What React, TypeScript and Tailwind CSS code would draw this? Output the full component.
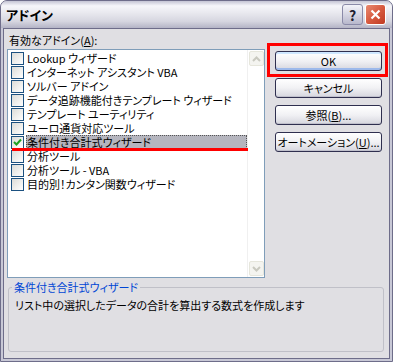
import React from "react";

const items: { label: string; checked?: boolean; selected?: boolean }[] = [
  { label: "Lookup ウィザード" },
  { label: "インターネット アシスタント VBA" },
  { label: "ソルバー アドイン" },
  { label: "データ追跡機能付きテンプレート ウィザード" },
  { label: "テンプレート ユーティリティ" },
  { label: "ユーロ通貨対応ツール" },
  { label: "条件付き合計式ウィザード", checked: true, selected: true },
  { label: "分析ツール" },
  { label: "分析ツール - VBA" },
  { label: "目的別！カンタン関数ウィザード" },
];

const font = {
  fontFamily: '"Noto Sans CJK JP", "Noto Sans", sans-serif',
  fontFeatureSettings: '"palt"',
};

function CheckBox({ checked }: { checked?: boolean }) {
  return (
    <div className="w-[13px] h-[13px] shrink-0 border border-[#1c5180] bg-gradient-to-br from-[#dcdcd7] to-[#ffffff] flex items-center justify-center">
      {checked && (
        <svg width="9" height="9" viewBox="0 0 9 9">
          <path d="M1 4 L3.5 6.5 L8 1.5" stroke="#21a121" strokeWidth="2" fill="none" />
        </svg>
      )}
    </div>
  );
}

function XPButton({ children, primary }: { children: React.ReactNode; primary?: boolean }) {
  return (
    <div
      className={`h-[20px] w-[107px] rounded-[3px] border border-[#2f2f4f] bg-gradient-to-b from-[#ffffff] via-[#f1f1f4] to-[#d6d6de] flex items-center justify-center text-[11px] leading-[14px] whitespace-nowrap text-black ${
        primary ? "shadow-[inset_0_-2px_0_#9db9eb,inset_0_2px_0_#cee7ff]" : "shadow-[inset_0_-1px_0_#c0c0cc]"
      }`}
    >
      {children}
    </div>
  );
}

export default function App() {
  return (
    <div className="w-[393px] h-[362px] relative overflow-hidden" style={font}>
      <div className="w-full h-full flex flex-col rounded-t-[7px] border border-[#6e6d8a] bg-[#c8c8d6]">
        {/* Title bar */}
        <div className="h-[27px] shrink-0 rounded-t-[6px] bg-[linear-gradient(to_bottom,#c4c4d4_0%,#f6f6fa_18%,#e8e8ee_45%,#d6d6e0_75%,#b4b4c6_100%)] flex items-center pl-[5px] pr-[6px]">
          <span className="text-[13px] font-bold text-black leading-none">アドイン</span>
          <div className="ml-auto flex items-center gap-[2px]">
            <div className="w-[21px] h-[21px] rounded-[3px] border border-[#8a8aa8] bg-gradient-to-b from-[#f4f4fa] to-[#b8b8cc] flex items-center justify-center text-[14px] font-bold text-[#202030] leading-none">
              ?
            </div>
            <div className="w-[21px] h-[21px] rounded-[3px] border border-white bg-gradient-to-br from-[#e88a70] via-[#d75a40] to-[#c03a22] flex items-center justify-center">
              <svg width="11" height="11" viewBox="0 0 11 11">
                <path d="M1.5 1.5 L9.5 9.5 M9.5 1.5 L1.5 9.5" stroke="white" strokeWidth="2.2" />
              </svg>
            </div>
          </div>
        </div>
        {/* Body */}
        <div className="flex-1 mx-[2px] mb-[2px] border border-[#6e6d8a] bg-[#e0dfe3] flex flex-col px-[3px] pb-[6px]">
          <div className="flex">
            {/* Left column */}
            <div className="flex flex-col">
              <div className="text-[11px] text-black leading-[14px] pt-[4px] pl-[2px] h-[20px] whitespace-nowrap">
                有効なアドイン(<span className="underline">A</span>):
              </div>
              <div className="w-[258px] h-[229px] border border-[#7f9db9] bg-white flex">
                <div className="flex-1 flex flex-col pt-[1px] pl-[3px]">
                  {items.map((it) => (
                    <div key={it.label} className="h-[14px] flex items-center gap-[2px] overflow-hidden">
                      <CheckBox checked={it.checked} />
                      <div
                        className={`h-[14px] flex-1 flex items-center pl-[1px] text-[11px] leading-[14px] text-black whitespace-nowrap ${
                          it.selected ? "bg-[#b5b5be] outline outline-1 outline-dotted outline-[#555] -outline-offset-1" : ""
                        }`}
                      >
                        {it.label}
                      </div>
                    </div>
                  ))}
                </div>
                <div className="w-[17px] flex flex-col justify-between border-l border-[#f0f0f0] p-[1px]">
                  <div className="w-[15px] h-[15px] rounded-[2px] border border-[#e6e6dc] bg-[#f4f4f0] flex items-center justify-center">
                    <svg width="9" height="6" viewBox="0 0 9 6">
                      <path d="M1 5 L4.5 1.5 L8 5" stroke="#c9c9c0" strokeWidth="2" fill="none" />
                    </svg>
                  </div>
                  <div className="w-[15px] h-[15px] rounded-[2px] border border-[#e6e6dc] bg-[#f4f4f0] flex items-center justify-center">
                    <svg width="9" height="6" viewBox="0 0 9 6">
                      <path d="M1 1 L4.5 4.5 L8 1" stroke="#c9c9c0" strokeWidth="2" fill="none" />
                    </svg>
                  </div>
                </div>
              </div>
            </div>
            {/* Right buttons */}
            <div className="flex flex-col gap-[7px] pt-[22px] pl-[10px]">
              <XPButton primary>OK</XPButton>
              <XPButton>キャンセル</XPButton>
              <XPButton>
                参照(<span className="underline">B</span>)...
              </XPButton>
              <XPButton>
                オートメーション(<span className="underline">U</span>)...
              </XPButton>
            </div>
          </div>
          {/* Group box */}
          <div className="relative mt-[9px] ml-[1px] mr-[2px] flex-1 rounded-[3px] border border-[#c0c0c8] px-[6px] pt-[10px]">
            <span className="absolute -top-[8px] left-[3px] bg-[#e0dfe3] px-[2px] text-[11px] leading-[14px] text-[#0046d5] whitespace-nowrap">
              条件付き合計式ウィザード
            </span>
            <div className="text-[11px] leading-[14px] text-black whitespace-nowrap">
              リスト中の選択したデータの合計を算出する数式を作成します
            </div>
          </div>
        </div>
      </div>
      {/* Annotations */}
      <div className="absolute left-[267px] top-[43px] w-[121px] h-[34px] border-[3px] border-[#ff0000]" />
      <div className="absolute left-[12px] top-[148px] w-[236px] h-[3px] bg-[#ff0000]" />
    </div>
  );
}
